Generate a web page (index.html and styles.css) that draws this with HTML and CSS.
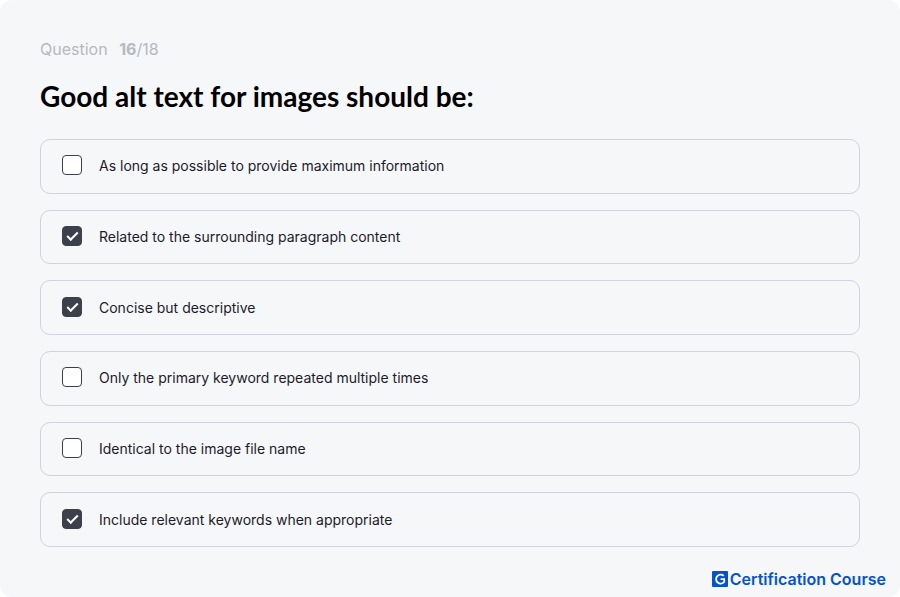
FILE: index.html
```html
<!DOCTYPE html>
<html lang="en">
<head>
    <meta charset="UTF-8">
    <meta name="viewport" content="width=device-width, initial-scale=1">
    <title>Certification Course</title>
    <link rel="stylesheet" href="styles.css">
</head>
<body>
    <main class="quiz">
        <p class="progress">Question <span class="count"><strong>16</strong>/18</span></p>
        <h1>Good alt text for images should be:</h1>

        <form class="answers">
            <label class="answer">
                <input type="checkbox" name="answer" value="1">
                <span>As long as possible to provide maximum information</span>
            </label>
            <label class="answer">
                <input type="checkbox" name="answer" value="2" checked>
                <span>Related to the surrounding paragraph content</span>
            </label>
            <label class="answer">
                <input type="checkbox" name="answer" value="3" checked>
                <span>Concise but descriptive</span>
            </label>
            <label class="answer">
                <input type="checkbox" name="answer" value="4">
                <span>Only the primary keyword repeated multiple times</span>
            </label>
            <label class="answer">
                <input type="checkbox" name="answer" value="5">
                <span>Identical to the image file name</span>
            </label>
            <label class="answer">
                <input type="checkbox" name="answer" value="6" checked>
                <span>Include relevant keywords when appropriate</span>
            </label>
        </form>

        <footer class="brand">
            <svg width="16" height="16" viewBox="0 0 16 16" aria-hidden="true">
                <rect width="16" height="16" rx="1" fill="#0552cf"/>
                <path d="M11.8 4.9A4.6 4.4 0 1 0 12.2 11V8.2H8.6" fill="none" stroke="#fff" stroke-width="1.8"/>
            </svg>
            <span>Certification Course</span>
        </footer>
    </main>
</body>
</html>
```

FILE: styles.css
```css
* {
    box-sizing: border-box;
}

body {
    margin: 0;
    background: #fff;
    font-family: Inter, sans-serif;
    color: #1c1b2b;
}

.quiz {
    display: flex;
    flex-direction: column;
    min-height: 100vh;
    padding: 39px 40px 8px;
    background: #f6f7f8;
    border-radius: 12px;
}

.progress {
    margin: 0;
    font-size: 16px;
    line-height: 20px;
    color: #b5b9c0;
}

.count {
    margin-left: 7px;
}

h1 {
    margin: 20px 0 26px;
    font-family: Lato, sans-serif;
    font-size: 28px;
    line-height: 34px;
    font-weight: bold;
    color: #000;
}

/* answers share the height left between heading and footer */
.answers {
    display: grid;
    grid-auto-rows: 1fr;
    flex: 1;
    gap: 16px;
}

.answer {
    display: flex;
    align-items: center;
    gap: 17px;
    padding: 8px 21px;
    border: 1px solid #d0d3dc;
    border-radius: 10px;
    font-size: 14px;
    line-height: 20px;
}

.answer input {
    appearance: none;
    display: grid;
    place-items: center;
    flex: none;
    width: 20px;
    height: 20px;
    margin: 0 0 2px;
    border: 1px solid #3c404a;
    border-radius: 4px;
    background: #fff;
}

.answer input:checked {
    background: #3c404a;
}

.answer input:checked::before {
    content: "";
    width: 9px;
    height: 4px;
    margin-bottom: 2px;
    border: solid #fff;
    border-width: 0 0 2px 2px;
    transform: rotate(-45deg);
}

.brand {
    display: flex;
    justify-content: flex-end;
    align-items: center;
    gap: 2px;
    margin: 22px -26px 0 0;
    font-size: 16px;
    line-height: 20px;
    font-weight: 600;
    color: #0552cf;
}
```
